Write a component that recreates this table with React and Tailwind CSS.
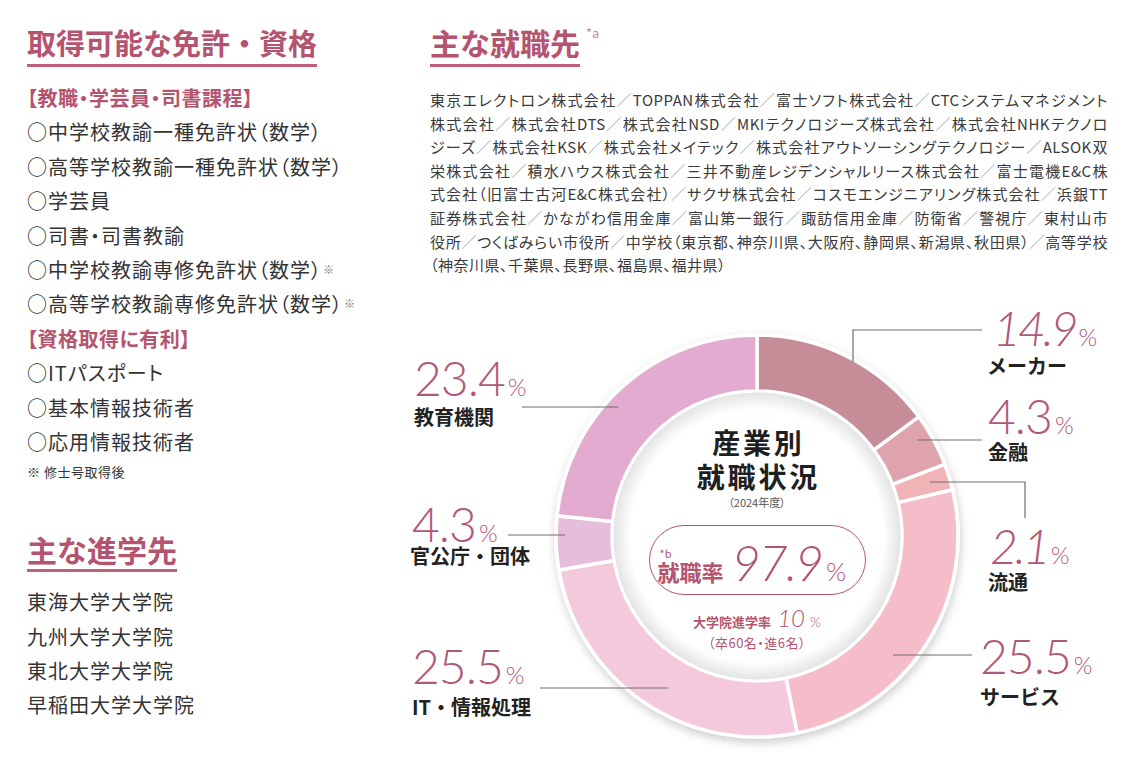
import React from 'react';

const SEGS = [
  { v: 14.9, c: '#c68c98' },
  { v: 4.3, c: '#dea3ac' },
  { v: 2.1, c: '#f1b3b5' },
  { v: 25.5, c: '#f5bdc9' },
  { v: 25.5, c: '#f5c9dc' },
  { v: 4.3, c: '#e5bedb' },
  { v: 23.4, c: '#e2abcf' },
];

function polar(cx, cy, r, deg) {
  const a = (deg * Math.PI) / 180;
  return [cx + r * Math.sin(a), cy - r * Math.cos(a)];
}
function sector(cx, cy, R, r, a0, a1) {
  const [x0, y0] = polar(cx, cy, R, a0);
  const [x1, y1] = polar(cx, cy, R, a1);
  const [x2, y2] = polar(cx, cy, r, a1);
  const [x3, y3] = polar(cx, cy, r, a0);
  const large = a1 - a0 > 180 ? 1 : 0;
  return `M${x0} ${y0} A${R} ${R} 0 ${large} 1 ${x1} ${y1} L${x2} ${y2} A${r} ${r} 0 ${large} 0 ${x3} ${y3} Z`;
}

const LINES = [
  '東京エレクトロン株式会社／TOPPAN株式会社／富士ソフト株式会社／CTCシステムマネジメント',
  '株式会社／株式会社DTS／株式会社NSD／MKIテクノロジーズ株式会社／株式会社NHKテクノロ',
  'ジーズ／株式会社KSK／株式会社メイテック／株式会社アウトソーシングテクノロジー／ALSOK双',
  '栄株式会社／積水ハウス株式会社／三井不動産レジデンシャルリース株式会社／富士電機E&C株',
  '式会社（旧富士古河E&C株式会社）／サクサ株式会社／コスモエンジニアリング株式会社／浜銀TT',
  '証券株式会社／かながわ信用金庫／富山第一銀行／諏訪信用金庫／防衛省／警視庁／東村山市',
  '役所／つくばみらい市役所／中学校（東京都、神奈川県、大阪府、静岡県、新潟県、秋田県）／高等学校',
  '（神奈川県、千葉県、長野県、福島県、福井県）',
];

function ParaLine({ text, last }) {
  const parts = text.split('／');
  return (
    <div className={last ? 'whitespace-nowrap' : 'text-justify [text-align-last:justify]'}>
      {parts.map((p, i) => (
        <React.Fragment key={i}>
          {i > 0 && <span className="text-[#a8a8a8]">／</span>}
          {p}
        </React.Fragment>
      ))}
    </div>
  );
}

function Pct({ n, className, italic }) {
  return (
    <div className={`absolute flex items-baseline leading-none text-[#b0587a] font-['Lato',sans-serif] font-light ${className}`}>
      <span className={italic ? 'text-[48px] leading-[40px] italic tracking-[-3px]' : 'text-[48px] leading-[40px] tracking-[-1px]'}>{n}</span>
      <span className="text-[24px] ml-[3px]">%</span>
    </div>
  );
}

function Name({ children, className }) {
  return (
    <div className={`absolute text-[20px] leading-[24px] font-bold text-[#222] whitespace-nowrap ${className}`}>
      {children}
    </div>
  );
}

function Chart() {
  const cx = 357, cy = 246, R = 201, r = 145;
  let acc = 0;
  const paths = SEGS.map((s, i) => {
    const a0 = acc * 3.6;
    acc += s.v;
    const a1 = acc * 3.6;
    return (
      <path
        key={i}
        d={sector(cx, cy, R, r, a0, a1)}
        fill={s.c}
        stroke="#ffffff"
        strokeWidth="3.5"
        strokeLinejoin="round"
      />
    );
  });
  return (
    <div className="relative w-[740px] h-[476px] -ml-[30px] mt-[13px]">
      <svg className="absolute left-0 top-0" width="740" height="476" viewBox="0 0 740 476">
        <defs>
          <filter id="ds" x="-15%" y="-15%" width="130%" height="130%">
            <feDropShadow dx="1" dy="4" stdDeviation="5" floodColor="#000" floodOpacity="0.2" />
          </filter>
          <radialGradient id="ig" cx="50%" cy="50%" r="50%">
            <stop offset="0.88" stopColor="#ffffff" />
            <stop offset="1" stopColor="#e4e4e4" />
          </radialGradient>
        </defs>
        <g filter="url(#ds)">{paths}</g>
        <circle cx={cx} cy={cy} r={r - 1.5} fill="url(#ig)" />
        <g stroke="#6e6e6e" strokeWidth="1.2" fill="none">
          <polyline points="453,72 453,40 582,40" />
          <polyline points="517,150 582,150" />
          <polyline points="530,192 625,192 625,228" />
          <polyline points="493,365 572,365" />
          <polyline points="140,398 268,398" />
          <polyline points="108,245 165,245" />
          <polyline points="122,117 218,117" />
        </g>
      </svg>

      <Pct n="14.9" italic className="left-[593px] top-[18px]" />
      <Name className="left-[587px] top-[64px]">メーカー</Name>
      <Pct n="4.3" className="left-[588px] top-[106px]" />
      <Name className="left-[588px] top-[150px]">金融</Name>
      <Pct n="2.1" italic className="left-[590px] top-[236px]" />
      <Name className="left-[588px] top-[280px]">流通</Name>
      <Pct n="25.5" className="left-[580px] top-[346px]" />
      <Name className="left-[580px] top-[395px]">サービス</Name>

      <Pct n="23.4" className="left-[14px] top-[68px]" />
      <Name className="left-[14px] top-[115px]">教育機関</Name>
      <Pct n="4.3" className="left-[12px] top-[214px]" />
      <Name className="left-[10px] top-[254px]">官公庁・団体</Name>
      <Pct n="25.5" className="left-[12px] top-[356px]" />
      <Name className="left-[12px] top-[405px]">IT・情報処理</Name>

      <div className="absolute left-[212px] top-[101px] w-[290px] h-[290px] flex flex-col items-center pt-[34px] text-center">
        <div className="text-[28px] leading-[34px] font-bold tracking-[0.1em] pl-[0.1em] text-[#1f1f1f]">産業別</div>
        <div className="text-[28px] leading-[34px] font-bold tracking-[0.1em] pl-[0.1em] text-[#1f1f1f]">就職状況</div>
        <div className="text-[11px] leading-[14px] mt-[2px] text-[#555] [font-feature-settings:'palt']">（2024年度）</div>
        <div className="mt-[16px] w-[217px] h-[70px] rounded-full border-[1.5px] border-[#b4546f] flex items-center justify-center pr-[10px] pt-[4px]">
          <div className="flex items-baseline text-[#b4546f]">
            <span className="relative text-[22px] font-bold leading-[22px]">
              <span className="absolute left-[2px] -top-[12px] text-[11px] leading-[11px] font-normal">*b</span>
              就職率
            </span>
            <span className="font-['Lato',sans-serif] font-light italic text-[50px] leading-[44px] tracking-[-2px] ml-[8px]">97.9</span>
            <span className="font-['Lato',sans-serif] font-light text-[26px] leading-none ml-[4px]">%</span>
          </div>
        </div>
        <div className="mt-[11px] flex items-baseline text-[#b4546f]">
          <span className="text-[13px] font-bold">大学院進学率</span>
          <span className="font-['Lato',sans-serif] font-light italic text-[24px] leading-[24px] ml-[6px]">10</span>
          <span className="font-['Lato',sans-serif] font-light text-[14px] ml-[5px]">%</span>
        </div>
        <div className="mt-[3px] text-[13px] leading-[16px] text-[#b4546f] [font-feature-settings:'palt'] tracking-[0.5px]">（卒60名・進6名）</div>
      </div>
    </div>
  );
}

function Item({ children, mark }) {
  return (
    <li className="whitespace-nowrap">
      ○{children}
      {mark && <span className="text-[11px] align-top relative top-[-1px] ml-[1px] text-[#777]">※</span>}
    </li>
  );
}

export default function App() {
  return (
    <div className="w-[1140px] h-[766px] bg-white flex overflow-hidden font-['Noto_Sans_CJK_JP',sans-serif] text-[#333]">
      {/* left column */}
      <div className="w-[430px] shrink-0 pl-[27px] pt-[24px]">
        <h2 className="inline-block text-[29px] leading-[36px] font-bold text-[#b4546f] border-b-[3px] border-[#bf6079] pb-[4px]">
          取得可能な免許・資格
        </h2>
        <ul className="mt-[14px] text-[20px] leading-[34.4px] tracking-[1px] [font-feature-settings:'palt']">
          <li className="font-bold text-[#b4546f] tracking-[0.5px]">【教職・学芸員・司書課程】</li>
          <Item>中学校教諭一種免許状（数学）</Item>
          <Item>高等学校教諭一種免許状（数学）</Item>
          <Item>学芸員</Item>
          <Item>司書・司書教諭</Item>
          <Item mark>中学校教諭専修免許状（数学）</Item>
          <Item mark>高等学校教諭専修免許状（数学）</Item>
          <li className="font-bold text-[#b4546f] tracking-[0.5px]">【資格取得に有利】</li>
          <Item>ITパスポート</Item>
          <Item>基本情報技術者</Item>
          <Item>応用情報技術者</Item>
          <li className="text-[13px] leading-[26px] tracking-[0.5px]">※ 修士号取得後</li>
        </ul>

        <h2 className="mt-[46px] inline-block text-[30px] leading-[36px] font-bold text-[#b4546f] border-b-[3px] border-[#bf6079] pb-[2px]">
          主な進学先
        </h2>
        <ul className="mt-[13px] text-[20px] leading-[34.3px] tracking-[1px]">
          <li>東海大学大学院</li>
          <li>九州大学大学院</li>
          <li>東北大学大学院</li>
          <li>早稲田大学大学院</li>
        </ul>
      </div>

      {/* right column */}
      <div className="flex-1 pt-[24px] flex flex-col">
        <div className="flex items-start">
          <h2 className="inline-block text-[30px] leading-[36px] font-bold text-[#b4546f] border-b-[3px] border-[#bf6079] pb-[4px]">
            主な就職先
          </h2>
          <span className="text-[13px] leading-[14px] text-[#c98aa0] ml-[6px] mt-[2px]">*a</span>
        </div>
        <div className="mt-[21px] w-[678px] text-[15px] leading-[23.6px] tracking-[0.5px] text-[#3a3a3a] [font-feature-settings:'palt']">
          {LINES.map((l, i) => (
            <ParaLine key={i} text={l} last={i === LINES.length - 1} />
          ))}
        </div>
        <Chart />
      </div>
    </div>
  );
}
